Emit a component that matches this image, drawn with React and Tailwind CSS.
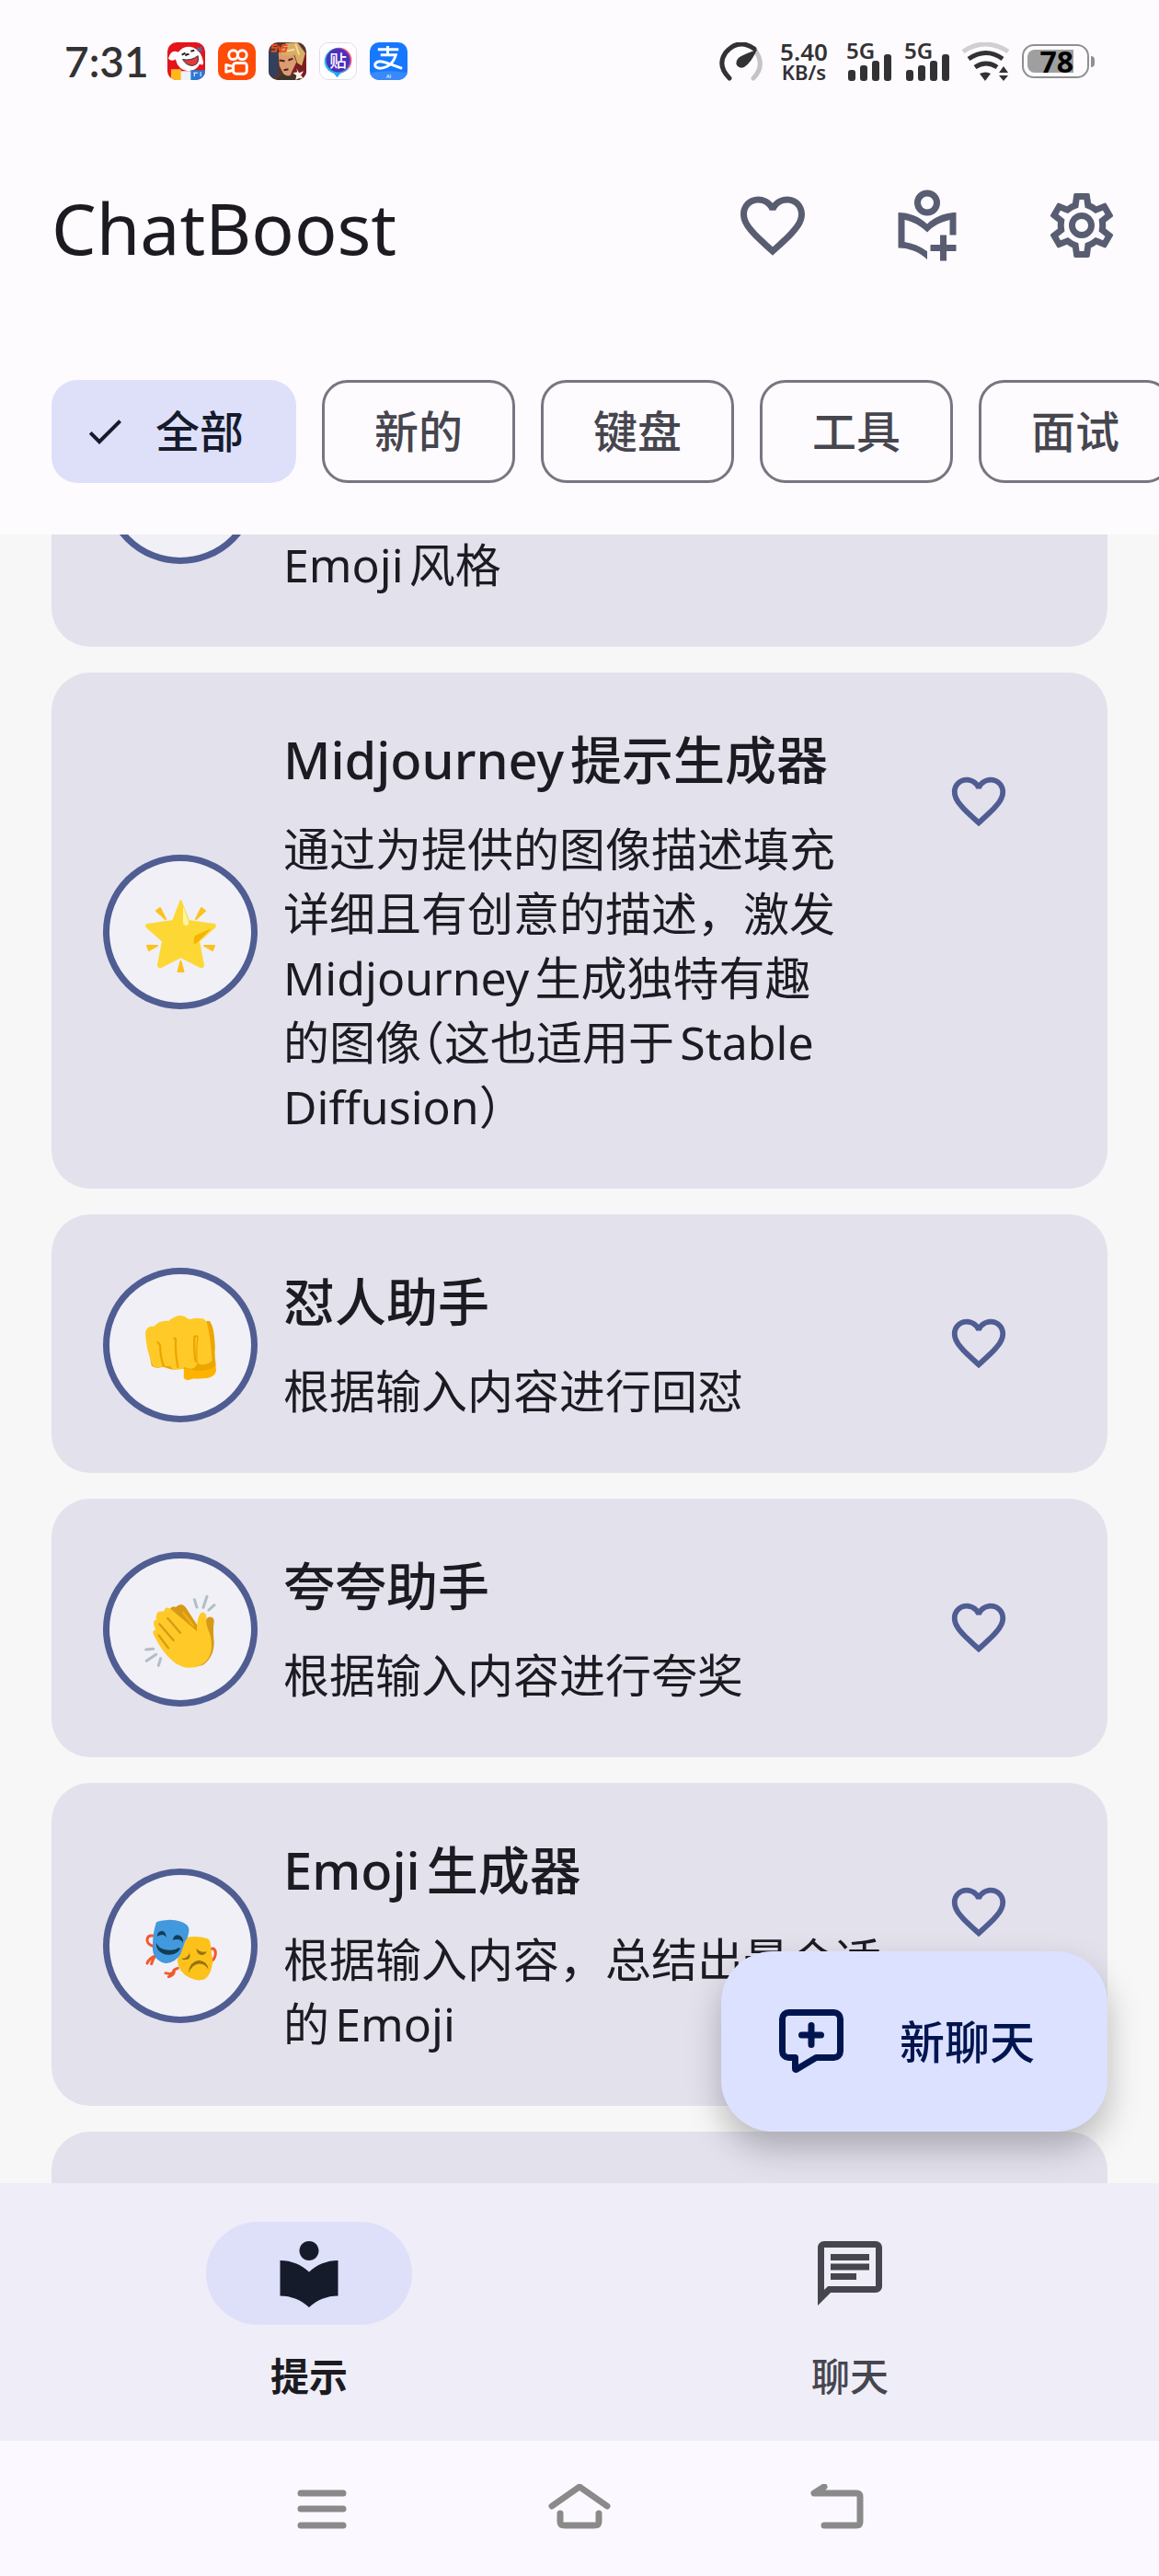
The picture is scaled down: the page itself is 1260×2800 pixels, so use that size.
import React, { useLayoutEffect, useRef, useState } from "react";
import { MdCheck, MdFavorite, MdFavoriteBorder, MdLocalLibrary, MdOutlineChat, MdOutlineSettings } from "react-icons/md";

const FILTERS = ["全部", "新的", "键盘", "工具", "面试"];

const PROMPTS = [
  { id: "style", title: "Emoji翻译", icon: "masks", text: "将输入内容翻译成\nEmoji风格" },
  {
    id: "midjourney",
    title: "Midjourney提示生成器",
    icon: "star",
    text: "通过为提供的图像描述填充\n详细且有创意的描述，激发\nMidjourney生成独特有趣\n的图像（这也适用于Stable\nDiffusion）",
  },
  { id: "retort", title: "怼人助手", icon: "fist", text: "根据输入内容进行回怼" },
  { id: "praise", title: "夸夸助手", icon: "clap", text: "根据输入内容进行夸奖" },
  { id: "emoji", title: "Emoji生成器", icon: "masks", text: "根据输入内容，总结出最合适\n的Emoji" },
  { id: "translate", title: "翻译助手", icon: "star", text: "根据输入内容进行翻译" },
];

function Star() {
  return (
    <svg viewBox="0 0 100 100" className="size-[100px]" aria-hidden="true">
      <g fill="#fcc21b" stroke="#fcc21b" strokeWidth="2" strokeLinejoin="round">
        <path d="M24 27l4-3 6 12zM77 27l-4-3-6 12zM14 65l11 0-9 5zM87 65l-11 0 9 5zM50.500 82l3 11h-6z" />
      </g>
      <path
        d="M50.500 16L59 38 87 42q2 1 0 3L70 60l5 26q0 3-3 2L50.500 77 29 88q-3 1-3-2l5-26L14 45q-2-2 0-3l28-4z"
        fill="#fdd835" stroke="#fdd835" strokeWidth="2" strokeLinejoin="round"
      />
      <path d="M53 22l6 17q0 4-2 4-4 0-4-4z" fill="#fff59d" />
      <path d="M84 46L66 54q-2 4-1 9 4-1 6-4z" fill="#f4b400" />
    </svg>
  );
}

function Fist() {
  return (
    <svg viewBox="-12 -27 300 300" className="size-[100px]" aria-hidden="true">
      <path d="M150 198l-1 30q3 10 16 9 12-6 26-4l34-2q26-4 30-24l-4-40z" fill="#ffb300" />
      <path d="M152 198q28 12 60 8 30-2 42-16l-4-40-70-10z" fill="#eda600" />
      <path d="M26 90L44 190q10 12 38 4l24 8q20 4 28-8 20 14 40 0 10-6 10-16 40 18 60-14l6-30q0-50-20-88z" fill="#eda600" />
      <path
        d="M24 82q2-14 16-20h12q16-18 36-18h12q22-18 40-17 12 0 22 10l6 2q26-6 42-2 14 2 18 26 8 40 14 110-10 12-24 12-16 6-24-6-2 14-14 20-14 4-28-4-10 10-24 8l-16-2-6-10q-12 2-20 1-12 4-24 2-10 2-14-6Q26 140 24 82z"
        fill="#ffca28"
      />
      <path d="M222 46q14 6 18 46 6 40 4 92 8-20 7-62-2-54-16-76-6-4-13 0z" fill="#eda600" />
      <g fill="none" stroke="#eda600" strokeWidth="7" strokeLinecap="round" strokeLinejoin="round">
        <path d="M65 114l7 10q1 40 12 68M118 101l5 2q-2 44 7 92M188 94l-4 2q-2 56 4 80" />
        <path d="M184 96q8-4 11-1-6 48-2 84" strokeWidth="4" />
      </g>
    </svg>
  );
}

function Clap() {
  return (
    <svg viewBox="-12 900 300 300" className="size-[100px]" aria-hidden="true">
      <g fill="none" stroke="#b0bec5" strokeWidth="9" strokeLinecap="round">
        <path d="M184 953l8 25M225 943l-12 36M249 971l-18 16M26 1116l24-2M28 1153l31-21M74 1145l-7 23" />
      </g>
      <path
        d="M105 984q4-12 18-7l10-6q12-6 22 6l40 62 28-22q4-10 16-7 10 2 9 16-4 20 0 66 0 50-36 74l-28 8z"
        fill="#d79a17"
      />
      <path
        d="M60 1004q4-16 18-12l8-3q2-12 12-9 6 0 16 10l78 66q0-40 8-52 6-12 14-9 10 3 9 20-2 20 10 46 16 50-4 84-22 32-68 30-26-2-50-24-34-28-60-84-6-12 4-14l2-4q-8-16-6-22 2-8 10-9-4-8-1-14z"
        fill="#ffca28"
      />
      <path d="M146 994l36 46" stroke="#f4b400" strokeWidth="6" />
      <g fill="none" stroke="#d79a17" strokeWidth="7" strokeLinecap="round">
        <path d="M97 1014l41 47M70 1033l46 53M68 1070l31 41" />
      </g>
    </svg>
  );
}

function Masks() {
  return (
    <svg viewBox="-12 -33 300 300" className="size-[100px]" aria-hidden="true">
      <g fill="none" stroke="#f4592b" strokeLinecap="round" strokeLinejoin="round">
        <path d="M48 84q-16-2-18 12-2 14 18 22M236 128q16-8 17 14-2 20-16 26" strokeWidth="9" />
        <path d="M56 150q-20 8-26 24M56 150q-10 16-12 26M130 190q-18 6-14 12-6 10-26 4M118 202q-2 12-18 16" strokeWidth="9" />
      </g>
      <path d="M128 164q20-44 30-74 34-8 70 4 8 4 9 24l7 50q-4 42-26 58-22 8-48-4-38-18-42-58z" fill="#fcc21b" />
      <path
        d="M60 40q10-6 44-8 40 2 54 16 10 8 8 22-2 20-12 32l-16 44q-16 24-44 28-18 0-34-16-14-14-12-40 0-44 12-78z"
        fill="#4299dd"
      />
      <path d="M60 107q6 18 30 23 30 4 44-8l4 4q-10 20-36 20-26 0-38-18-6-10-4-21z" fill="#133c55" />
      <path d="M62 86q2-18 18-18 12 4 12 22-8-16-30-4zM113 98q6-20 22-15 14 6 12 24-8-16-34-9z" fill="#133c55" />
      <path d="M142 158q20 0 26-18 6 20-10 22-12 2-16-4zM190 126q14 14 34 10-4 12-18 11-14-2-16-21zM164 206q4-38 34-42 28 2 32 30-14-22-34-18-18 2-32 30z" fill="#97740c" />
    </svg>
  );
}

const EMOJI = { star: Star, fist: Fist, clap: Clap, masks: Masks };

function LibraryAddIcon() {
  return (
    <svg viewBox="0 0 24 24" className="size-[84px]" fill="currentColor" aria-hidden="true">
      <circle cx="12" cy="5" r="3" fill="none" stroke="currentColor" strokeWidth="2" />
      <path d="M12 11.550C9.640 9.350 6.480 8 3 8v11c3.480 0 6.640 1.350 9 3.550v-2.500c-2.100-1.530-4.500-2.530-7-2.900v-6.900c2.600.550 5 1.850 7 3.900 2-2.050 4.400-3.350 7-3.900V15h2V8c-3.480 0-6.640 1.350-9 3.550z" />
      <path d="M16 15h2v3h3v2h-3v3h-2v-3h-3v-2h3z" />
    </svg>
  );
}

function NewChatIcon() {
  return (
    <svg viewBox="0 0 24 24" className="size-[84px]" fill="none" stroke="currentColor" strokeWidth="2" strokeLinecap="round" strokeLinejoin="round" aria-hidden="true">
      <path d="M5 3h14a2 2 0 0 1 2 2v10a2 2 0 0 1-2 2h-5.500L7.300 20.700Q7 20.800 7 20.500V17H5a2 2 0 0 1-2-2V5a2 2 0 0 1 2-2zM12 7v6M9 10h6" />
    </svg>
  );
}

function AppIcons() {
  return (
    <div className="flex gap-[14px]">
      <svg viewBox="0 0 42 42" className="size-[41px] rounded-[10px]" aria-hidden="true">
        <path d="M0 0h42v42H0z" fill="#e3141c" />
        <path d="M1 18Q4 7 12 11q7-9 17-5 9 4 11 16 0 5-4 2-4 8-13 8-11-1-14-13-5 3-8-1z" fill="#fff" />
        <path d="M17 19q9 2 17-4 2 10-6 11-7 0-11-7z" fill="#e03a3a" stroke="#333" />
        <path d="M16 14l4-2M26 10l4-1" stroke="#222" strokeWidth="2" />
        <path d="M20 15q2-3 4-1" stroke="#222" strokeWidth="2" fill="none" />
        <path d="M33 6l6 4M38 5l-4 5" stroke="#4d6fae" strokeWidth="2" />
        <path d="M14 32h14v10H14z" fill="#eef1f6" />
        <path d="M4 30h11v12H4z" fill="#ffb81c" />
        <path d="M26 31h16v11H26z" fill="#2b78d8" />
        <path d="M29 34h5m-4 0v4m7-5v5" stroke="#fff" />
      </svg>
      <svg viewBox="0 0 42 42" className="size-[41px] rounded-[10px]" fill="none" stroke="#fff" strokeWidth="3" aria-hidden="true">
        <path d="M0 0h42v42H0z" fill="#ff4a08" stroke="none" />
        <circle cx="17" cy="14" r="5" />
        <circle cx="27" cy="14" r="5" />
        <rect x="17" y="23" width="15" height="12" rx="3" />
        <path d="M17 27l-8-2v8l8-2" strokeLinejoin="round" />
      </svg>
      <svg viewBox="0 0 42 42" className="size-[41px] rounded-[10px]" aria-hidden="true">
        <path d="M0 0h42v42H0z" fill="#54352f" />
        <path d="M0 12l10-4v30H0z" fill="#31405f" />
        <path d="M28 16l14-6v32H26z" fill="#7c1d22" />
        <path d="M11 12l15-4 5 14-7 15-6 1-6-12z" fill="#dc9b72" />
        <path d="M11 12L19 1l13-1 9 12-4 14-5-3-3-9-11 1z" fill="#d8ae66" />
        <path d="M18 10l11-2M30 2l4 12" stroke="#f6dc9d" strokeWidth="2" />
        <path d="M12 20l6 1m4-1l5-2M17 31l5-1" stroke="#4b241c" strokeWidth="2" />
        <path d="M8 42l8-7 8 4 8-5 10 8z" fill="#3c352a" />
        <path d="M31 29l3 5 5-2-3 5 4 4-6-1-4 2 1-5-4-3 5-1z" fill="#fff0e4" />
        <path d="M10 3H5L4 6h5L8 10H3m8-6l2 6 2-6m6-1h-5l-1 3h5l-1 4h-5" fill="none" stroke="#e84e20" strokeWidth="2" />
      </svg>
      <svg viewBox="0 0 42 42" className="size-[41px] rounded-[10px] border border-[#dedde3]" aria-hidden="true">
        <path d="M0 0h42v42H0z" fill="#fff" />
        <circle cx="22" cy="20" r="15" fill="#fb4f78" />
        <circle cx="20" cy="21" r="15" fill="#25b9ef" />
        <path d="M15 34l5 6 5-6z" fill="#25a9ef" />
        <circle cx="21" cy="20" r="14" fill="#4b31bd" />
        <text x="21" y="28" textAnchor="middle" fontSize="20" fontWeight="500" fill="#fff" fontFamily="Noto Sans CJK SC, sans-serif">贴</text>
      </svg>
      <svg viewBox="0 0 42 42" className="size-[41px] rounded-[10px]" aria-hidden="true">
        <path d="M0 0h42v42H0z" fill="#1677ff" />
        <path d="M0 34q20-4 42 0v8H0z" fill="#3989f8" />
        <path d="M20 4v10M9 8h23M12 14h17q-4 14-18 15-6-1-5-5 3-5 13-1l17 6" fill="none" stroke="#fff" strokeWidth="3" />
        <text x="21" y="40" textAnchor="middle" fontSize="6" fill="#fff" fontFamily="Roboto, sans-serif">AI</text>
      </svg>
    </div>
  );
}

function Signal() {
  return (
    <div className="relative h-[42px] w-[50px]">
      <span className="absolute left-0 top-0 text-[24px] leading-[18px] font-semibold">5G</span>
      <svg viewBox="0 0 50 42" className="size-full" fill="currentColor" aria-hidden="true">
        <rect x="2" y="30" width="8" height="12" rx="3" />
        <rect x="15" y="25" width="8" height="17" rx="3" />
        <rect x="28" y="20" width="8" height="22" rx="3" />
        <rect x="41" y="13" width="8" height="29" rx="3" />
      </svg>
    </div>
  );
}

function StatusBar() {
  return (
    <div className="flex h-[133px] shrink-0 items-center justify-between px-[70px] text-[#323234]">
      <div className="flex items-center gap-[20px]">
        <span className="font-['Lato','Noto_Sans',sans-serif] text-[46px] leading-[48px] font-semibold">7:31</span>
        <AppIcons />
      </div>
      <div className="flex items-center">
        <svg viewBox="0 0 48 42" className="h-[42px] w-[48px]" fill="none" strokeWidth="5" strokeLinecap="round" aria-hidden="true">
          <path d="M40 10q10 16-3 29" stroke="#c4c4c7" />
          <path d="M11 39Q-3 25 7 11 21-5 38 7" stroke="currentColor" />
          <path d="M41 8Q34 23 27 27q-5 2-8-2-2-5 3-9 7-4 19-8z" fill="currentColor" stroke="none" />
        </svg>
        <div className="ml-[14px] mr-[16px] w-[60px] text-center font-semibold">
          <div className="text-[26px] leading-[22px]">5.40</div>
          <div className="text-[22px] leading-[22px]">KB/s</div>
        </div>
        <Signal />
        <div className="w-[13px]" />
        <Signal />
        <svg viewBox="0 0 54 42" className="ml-[12px] h-[42px] w-[54px]" fill="none" stroke="currentColor" strokeWidth="5" aria-hidden="true">
          <path d="M2 10q24-16 49 0" stroke="#d0d0d3" />
          <path d="M8 18q19-13 37 0M15 27q12-8 24 0" />
          <path d="M20 34q7-3 12 0l-6 8zM46 26l5 7H41zM46 42l5-6H41z" fill="currentColor" stroke="none" />
        </svg>
        <div className="ml-[12px] flex items-center">
          <div className="flex h-[37px] w-[73px] rounded-[13px] border-2 border-[#8f8f91] p-[4px]">
            <span className="flex w-[50px] items-center justify-end rounded-l-[8px] bg-[#9f9f9f] text-[32px] leading-[26px] font-bold text-black">78</span>
          </div>
          <span className="ml-[2px] h-3 w-1 rounded-r-full bg-[#8f8f91]" />
        </div>
      </div>
    </div>
  );
}

// full-width brackets are set at half width, like the system font does
function Description({ text }) {
  return (
    <p className="mt-[25px] whitespace-pre-line text-[50px] leading-[70px]">
      {text.split(/([（）])/).map((part, i) =>
        part === "（" || part === "）" ? <span key={i} className="[font-feature-settings:'halt']">{part}</span> : part
      )}
    </p>
  );
}

function PromptCard({ prompt, liked, onLike }) {
  const Icon = EMOJI[prompt.icon];
  return (
    <li className="flex shrink-0 items-center gap-[28px] rounded-[42px] bg-[#e3e1ec] px-[56px] pt-[56px] pb-[54px]">
      <div className="flex size-[168px] shrink-0 items-center justify-center rounded-full border-[7px] border-[#4f5d92] bg-[#f1f0f7]">
        <Icon />
      </div>
      <div className="min-w-0 flex-1">
        <h2 className="text-[56px] leading-[76px] font-medium">{prompt.title}</h2>
        <Description text={prompt.text} />
      </div>
      <button
        onClick={onLike}
        aria-label={`收藏 ${prompt.title}`}
        aria-pressed={liked}
        className="-ml-[28px] flex size-[168px] shrink-0 items-center justify-center self-start text-[#4f5d92]"
      >
        {liked ? <MdFavorite className="size-[70px]" /> : <MdFavoriteBorder className="size-[70px]" />}
      </button>
    </li>
  );
}

function NavItem({ label, active, onClick, children }) {
  return (
    <button
      onClick={onClick}
      className={`flex flex-1 flex-col items-center gap-[28px] pt-[42px] ${active ? "font-bold text-[#1b1b21]" : "font-medium text-[#46464f]"}`}
    >
      <span className={`flex h-[112px] w-[224px] items-center justify-center rounded-full ${active ? "bg-[#dee0fa] text-[#161b2c]" : ""}`}>
        {children}
      </span>
      <span className="text-[42px] leading-[56px]">{label}</span>
    </button>
  );
}

export default function App() {
  const [filter, setFilter] = useState("全部");
  const [tab, setTab] = useState("prompts");
  const [liked, setLiked] = useState([]);
  const listRef = useRef(null);

  useLayoutEffect(() => { listRef.current.scrollTop = 257; }, []);

  const toggle = (id) => setLiked((ids) => ids.includes(id) ? ids.filter((x) => x !== id) : [...ids, id]);

  return (
    <div lang="zh-CN" className="flex h-screen flex-col overflow-hidden bg-[#fefbff] font-['Noto_Sans','Noto_Sans_CJK_SC',sans-serif] text-[#1b1b21] [text-autospace:normal]">
      <StatusBar />

      <header className="flex h-[224px] shrink-0 items-center justify-between pl-[56px]">
        <h1 className="pt-[6px] text-[77px] leading-[98px]">ChatBoost</h1>
        <div className="flex text-[#595d72]">
          <button aria-label="收藏" className="flex size-[168px] items-center justify-center"><MdFavoriteBorder className="size-[84px]" /></button>
          <button aria-label="添加提示" className="flex size-[168px] items-center justify-center"><LibraryAddIcon /></button>
          <button aria-label="设置" className="flex size-[168px] items-center justify-center"><MdOutlineSettings className="size-[84px]" /></button>
        </div>
      </header>

      <div className="flex shrink-0 gap-[28px] overflow-x-auto px-[56px] py-[56px] text-[48px] leading-[70px] font-medium [scrollbar-width:none]">
        {FILTERS.map((f) => {
          const on = f === filter;
          return (
            <button
              key={f}
              onClick={() => setFilter(f)}
              aria-pressed={on}
              className={`flex h-[112px] shrink-0 items-center rounded-[28px] ${on ? "gap-[31px] bg-[#dee0fa] pl-[34px] pr-[57px] text-[#161b2c]" : "border-[3px] border-[#777680] px-[54px] text-[#46464f]"}`}
            >
              {on && <MdCheck className="size-[48px]" />}
              {f}
            </button>
          );
        })}
      </div>

      <main className="relative min-h-0 flex-1 bg-[#f7f7f7]">
        <ul ref={listRef} className="flex h-full flex-col gap-[28px] overflow-y-auto px-[56px] pt-[28px] pb-[28px] [scrollbar-width:none]">
          {PROMPTS.map((p) => (
            <PromptCard key={p.id} prompt={p} liked={liked.includes(p.id)} onLike={() => toggle(p.id)} />
          ))}
        </ul>
        <button className="absolute right-[56px] bottom-[56px] flex h-[196px] w-[420px] items-center gap-[54px] rounded-[56px] bg-[#dce1ff] pl-[56px] text-[49px] leading-[70px] font-medium text-[#001550] shadow-[0_18px_36px_rgba(0,0,0,0.25)]">
          <NewChatIcon />
          新聊天
        </button>
      </main>

      <nav className="z-10 flex h-[280px] shrink-0 items-start gap-[28px] bg-[#efedf7] px-[56px]">
        <NavItem label="提示" active={tab === "prompts"} onClick={() => setTab("prompts")}><MdLocalLibrary className="size-[84px]" /></NavItem>
        <NavItem label="聊天" active={tab === "chats"} onClick={() => setTab("chats")}><MdOutlineChat className="size-[84px]" /></NavItem>
      </nav>

      <div className="flex h-[147px] shrink-0 items-center justify-center bg-[#fbf9ff] text-[#8a8a8a]">
        <button aria-label="最近任务" className="flex w-[280px] justify-center">
          <svg viewBox="0 0 70 54" className="h-[54px] w-[70px]" fill="none" stroke="currentColor" strokeWidth="7" strokeLinecap="round">
            <path d="M12 10h46M12 27h46M12 45h46" />
          </svg>
        </button>
        <button aria-label="主屏幕" className="flex w-[280px] justify-center">
          <svg viewBox="0 0 70 54" className="h-[54px] w-[70px]" fill="none" stroke="currentColor" strokeWidth="7" strokeLinecap="round" strokeLinejoin="round">
            <path d="M5 24L35 3l30 21M14 32v9q0 4 5 4h32q5 0 5-4v-9" />
          </svg>
        </button>
        <button aria-label="返回" className="flex w-[280px] justify-center">
          <svg viewBox="0 0 70 54" className="h-[54px] w-[70px]" fill="none" stroke="currentColor" strokeWidth="7" strokeLinecap="round" strokeLinejoin="round">
            <path d="M21 3L10 10h46q4 0 4 4v27q0 4-4 4H21" />
          </svg>
        </button>
      </div>
    </div>
  );
}
